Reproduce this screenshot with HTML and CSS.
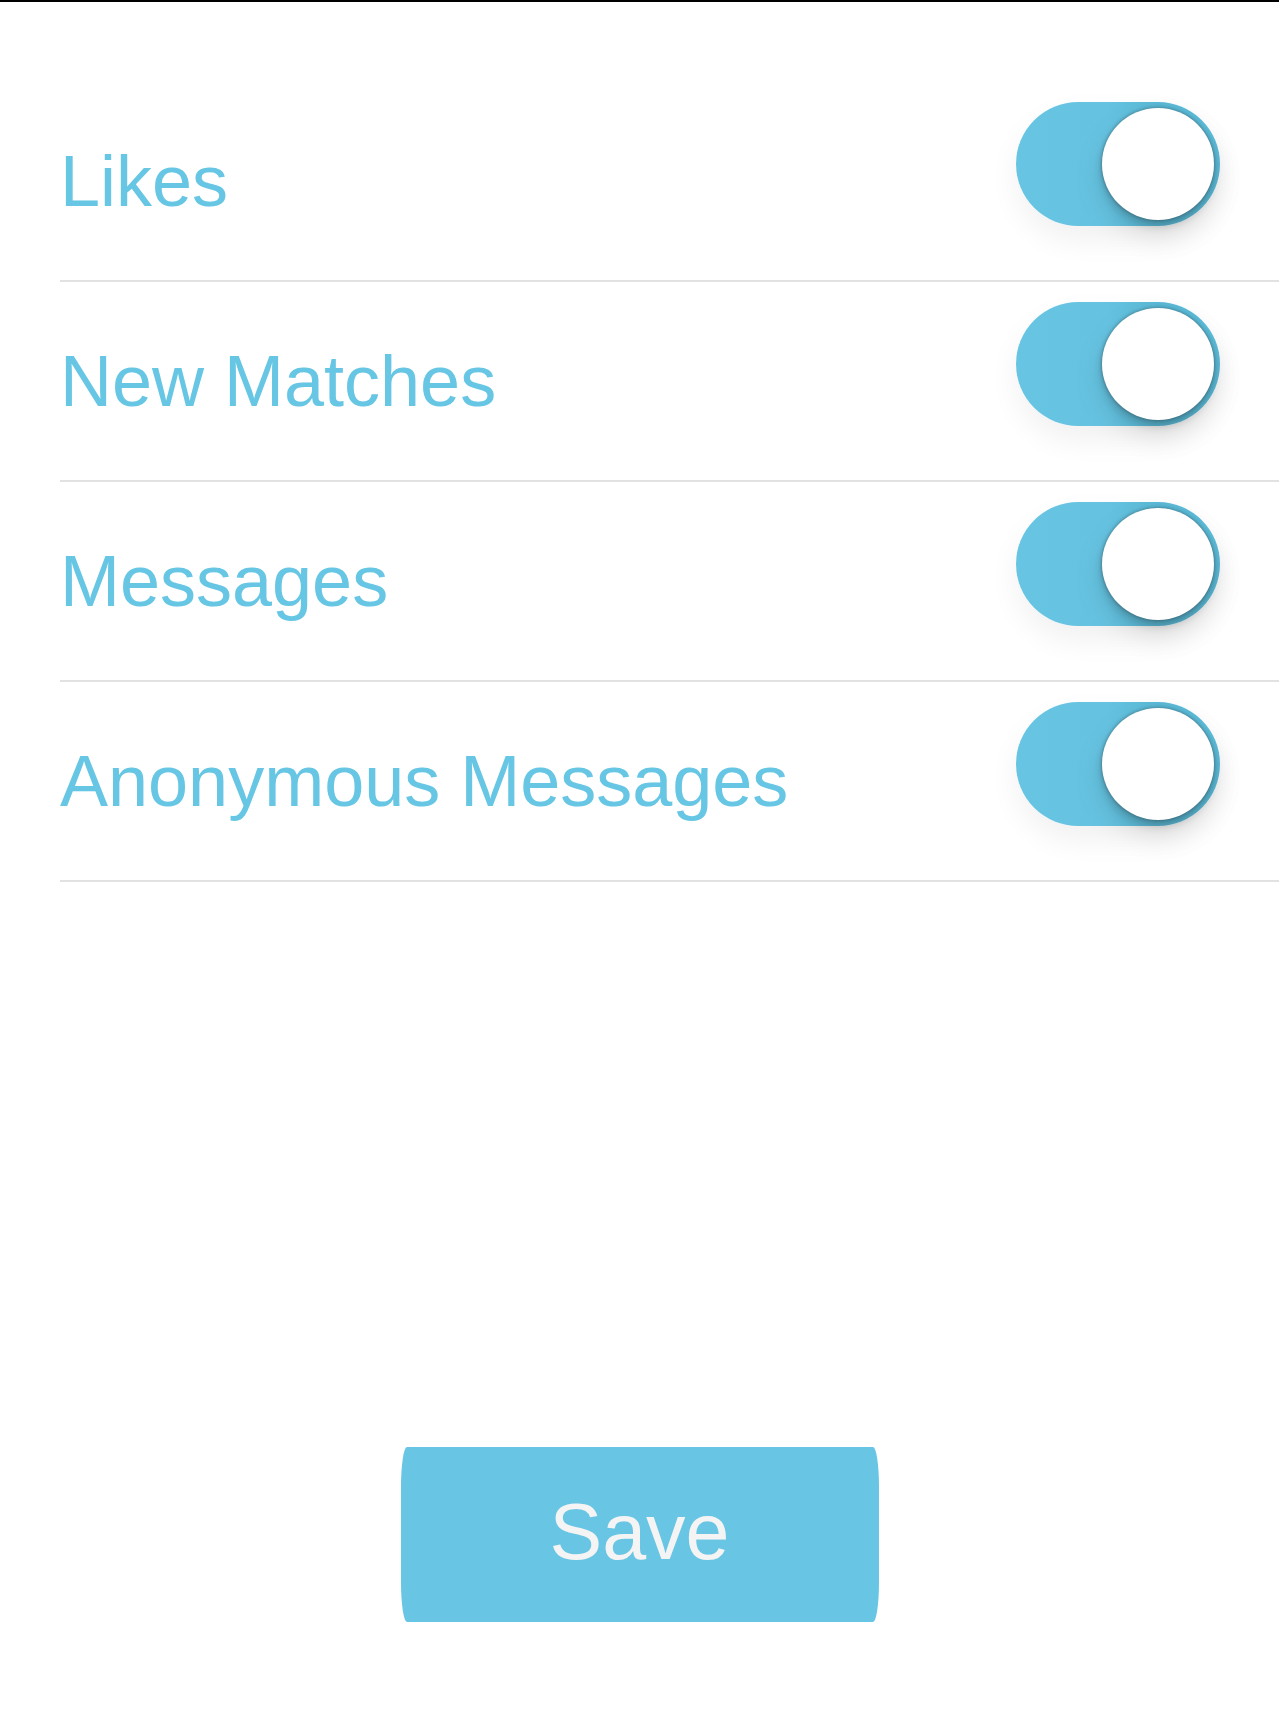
FILE: index.html
```html
<!DOCTYPE html>
<html lang="en">
<head>
<meta charset="utf-8">
<title>Notifications</title>
<link rel="stylesheet" href="styles.css">
</head>
<body>
<div class="page">
  <ul class="settings">
    <li class="row">
      <span class="label">Likes</span>
      <span class="switch"><span class="knob"></span></span>
    </li>
    <li class="row">
      <span class="label">New Matches</span>
      <span class="switch"><span class="knob"></span></span>
    </li>
    <li class="row">
      <span class="label">Messages</span>
      <span class="switch"><span class="knob"></span></span>
    </li>
    <li class="row">
      <span class="label">Anonymous Messages</span>
      <span class="switch"><span class="knob"></span></span>
    </li>
  </ul>
  <div class="actions">
    <button class="save" type="button">Save</button>
  </div>
</div>
</body>
</html>
```

FILE: styles.css
```css
html, body {
  margin: 0;
  padding: 0;
  background: #ffffff;
}

body {
  font-family: "Liberation Sans", Arial, Helvetica, sans-serif;
}

.page {
  border-top: 2px solid #000000;
  min-height: 1721px;
  box-sizing: border-box;
}

.settings {
  list-style: none;
  margin: 80px 0 0 60px;
  padding: 0;
}

.row {
  display: flex;
  align-items: center;
  justify-content: space-between;
  height: 198px;
  border-bottom: 2px solid #e2e2e2;
  padding-right: 59px;
}

.label {
  font-size: 72px;
  line-height: 1;
  color: #66c6e4;
}

.switch {
  position: relative;
  display: block;
  width: 204px;
  height: 124px;
  border-radius: 62px;
  background: linear-gradient(to right, #67c5e3 0%, #65c3e1 45%, #5ab9d5 70%, #5cbcd9 100%);
  margin-bottom: 34px;
  box-shadow: 0 14px 30px rgba(0, 0, 0, 0.06);
}

.knob {
  position: absolute;
  top: 6px;
  right: 6px;
  width: 112px;
  height: 112px;
  border-radius: 50%;
  background: #ffffff;
  box-shadow:
    0 0 3px 1px rgba(50, 60, 70, 0.35),
    0 6px 8px rgba(0, 0, 0, 0.16),
    0 14px 30px rgba(0, 0, 0, 0.12);
}

.actions {
  display: flex;
  justify-content: center;
  margin-top: 565px;
}

.save {
  width: 478px;
  height: 175px;
  border: none;
  border-radius: 6px / 40px;
  background: #68c5e3;
  color: #f4f4f4;
  font-family: "Liberation Sans", Arial, Helvetica, sans-serif;
  font-size: 79px;
  line-height: 1;
  padding: 0 0 6px 0;
}
```
